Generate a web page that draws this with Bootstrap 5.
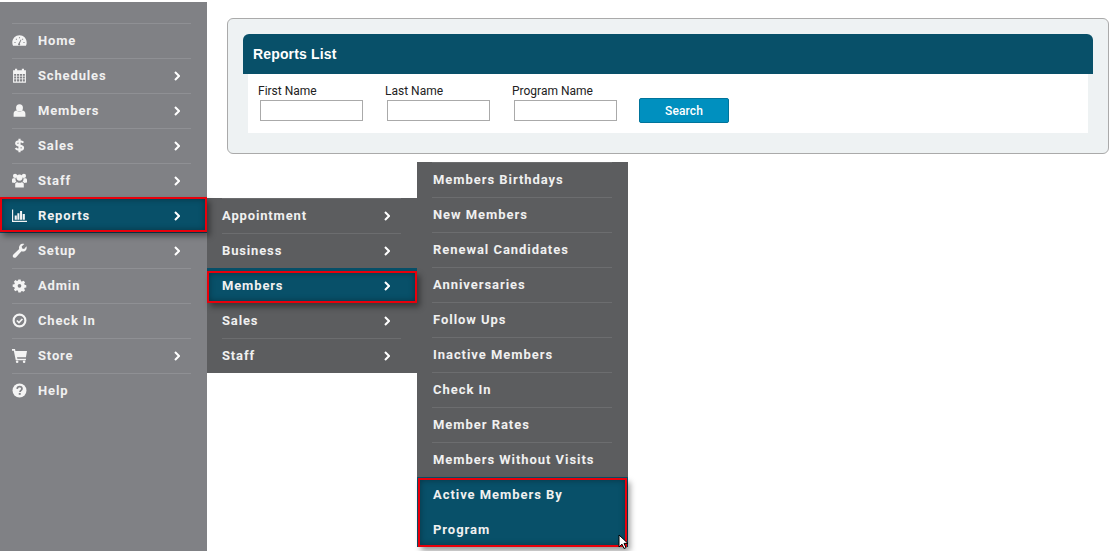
<!DOCTYPE html>
<html lang="en">
<head>
<meta charset="utf-8">
<title>Reports List</title>
<link href="https://cdn.jsdelivr.net/npm/bootstrap@5.3.0/dist/css/bootstrap.min.css" rel="stylesheet">
<style>
html,body{height:551px;overflow:hidden;background:#fff}
.side-col{width:207px;margin-top:2px;height:549px;background:#808185;padding-top:21px;flex:none}
.menu-list{list-style:none;margin:0;padding:0}
.menu-item{position:relative}
.menu-link{display:flex;align-items:center;height:35px;padding:0 27px 0 12px;color:#f0f0f0;text-decoration:none;font:700 13px/20px Roboto,sans-serif;letter-spacing:.85px;position:relative}
.menu-link:hover{color:#f0f0f0}
.menu-link::before{content:"";position:absolute;left:12px;right:16px;top:0;height:1px;background:#8f9094}
.menu-link .ico{width:15px;height:15px;margin-right:11px;flex:none;fill:#f4f4f4}
.menu-link .lbl{flex:1}
.menu-link .chev{width:6px;height:10px;flex:none;fill:none;stroke:#fff;stroke-width:2}
.flyout{position:absolute;left:100%;background:#5c5d5f;z-index:2}
.fly-a{top:0;width:210px}
.fly-b{top:-106px;width:211px}
.flyout .menu-link{padding:0 27px 0 15px}
.fly-b .menu-link{padding:0 15px 0 16px;letter-spacing:.95px}
.flyout .menu-link::before{left:15px;right:16px;background:#6c6d6f}
.menu-item.is-on>.menu-link{background:#085069}
.menu-item.is-on>.menu-link::before{display:none}
.menu-item.is-on+.menu-item>.menu-link::before{display:none}
.marked::after{content:"";position:absolute;border:2px solid #e8000b;box-shadow:3px 4px 6px rgba(0,0,0,.4),inset 0 0 6px rgba(0,0,0,.35);pointer-events:none;z-index:3}
.mark-a::after{left:0;right:0;top:-1px;bottom:1px}
.mark-b::after{left:0;right:0;top:3px;bottom:0}
.mark-c::after{left:1px;right:1px;top:1px;bottom:0}
.fly-b .wrap-row{height:70px;align-items:flex-start;padding-top:0;line-height:35px;white-space:normal}
.fly-b .wrap-row .lbl{line-height:35px;padding-right:30px}
.cursor{position:absolute;right:-2px;bottom:-3px;width:12px;height:16px;z-index:4}
.main-col{flex:1;padding:18px 0 0 20px;min-width:0}
.panel-box{background:#eef2f3;border:1px solid #aaa;border-radius:6px;height:136px;padding:15px 15px 0}
.panel-head{background:#085069;color:#fff;height:40px;border-radius:6px 6px 0 0;padding:0 10px;display:flex;align-items:center;font:700 14px/20px "Liberation Sans",Arial,sans-serif;letter-spacing:.15px}
.panel-body{background:#fff;height:59px;margin:0 5px;padding:10px 10px 0;display:flex;font:400 12px/15px Roboto,sans-serif;color:#222}
.field{width:127px;flex:none}
.field label{display:block;height:16px;line-height:15px}
.field input{display:block;width:103px;height:21px;margin-left:2px;border:1px solid #aaa;background:#fff;padding:0 3px;border-radius:0;outline:0}
.go-btn{width:90px;height:25px;margin:14px 0 0 0;padding:0;background:#0090bf;border:1px solid #00749b;border-radius:2px;color:#fff;font:500 12px/20px Roboto,sans-serif;letter-spacing:.1px}
.go-btn:hover{background:#0090bf;color:#fff;border-color:#00749b}
</style>
</head>
<body class="d-flex">
<svg width="0" height="0" class="position-absolute">
<defs>
<symbol id="chev" viewBox="0 0 6 10"><path d="M1 1l4 4-4 4"/></symbol>
</defs>
</svg>
<aside class="side-col">
<ul class="menu-list">
<li class="menu-item"><a class="menu-link" href="#"><svg class="ico" viewBox="0 0 14 14"><path fill-rule="evenodd" d="M7 2.200C3.300 2.200.3 5.200.3 9c0 1 .2 1.900.7 2.800h12c.5-.9.700-1.800.7-2.800 0-3.800-3-6.800-6.700-6.800zM2.300 8.300h1v1h-1zM3.600 5.300h1v1h-1zM6.500 4h1v1h-1zM9.400 5.300h1v1h-1zM10.700 8.300h1v1h-1zM6 9.800L8.200 6l.6.300-1.500 3.500a1 1 0 1 1-1.300 0z"/></svg><span class="lbl">Home</span></a></li>
<li class="menu-item"><a class="menu-link" href="#"><svg class="ico" viewBox="0 0 14 14"><path fill-rule="evenodd" d="M1 2.200h1.800V.8h2v1.400h4.400V.8h2v1.400H13V13.800H1zM2 5.500v1.700h1.900V5.500zM4.700 5.500v1.700h2V5.500zM7.400 5.500v1.700h2V5.500zM10.100 5.500v1.700H12V5.500zM2 8v1.700h1.900V8zM4.700 8v1.700h2V8zM7.400 8v1.700h2V8zM10.100 8v1.700H12V8zM2 10.500v2.200h1.900v-2.200zM4.700 10.500v2.200h2v-2.200zM7.400 10.500v2.200h2v-2.200zM10.100 10.500v2.200H12v-2.200z"/></svg><span class="lbl">Schedules</span><svg class="chev"><use href="#chev"/></svg></a></li>
<li class="menu-item"><a class="menu-link" href="#"><svg class="ico" viewBox="0 0 14 14"><ellipse cx="7" cy="4.600" rx="3.200" ry="3.400"/><path d="M1.500 12.800V10c0-1.600 1-2.800 2.900-3C5.100 7.700 6 8.200 7 8.200s1.900-.5 2.600-1.200c1.900.2 2.900 1.400 2.900 3v2.800z"/></svg><span class="lbl">Members</span><svg class="chev"><use href="#chev"/></svg></a></li>
<li class="menu-item"><a class="menu-link" href="#"><svg class="ico" viewBox="0 0 14 14"><path fill="none" stroke="#f4f4f4" stroke-width="2" d="M10.600 4.400C9.900 3.500 8.600 3 7 3 5.200 3 3.900 3.800 3.900 5.100 3.900 7.900 10.300 6.300 10.300 9.100c0 1.300-1.400 2-3.300 2-1.600 0-2.900-.6-3.700-1.600M7 .6v12.800"/></svg><span class="lbl">Sales</span><svg class="chev"><use href="#chev"/></svg></a></li>
<li class="menu-item"><a class="menu-link" href="#"><svg class="ico" viewBox="0 0 14 14"><circle cx="2.900" cy="2.700" r="2"/><circle cx="11.100" cy="2.700" r="2"/><circle cx="7" cy="4.300" r="2.900"/><path d="M0 8.800V6.500C0 5.600.6 5 1.500 5h1.800c-.2 1.300.1 2.300.9 3.100-.9.200-1.400.6-1.700 1.300zM14 8.800V6.500C14 5.600 13.400 5 12.500 5h-1.800c.2 1.300-.1 2.300-.9 3.100.9.200 1.400.6 1.700 1.300zM3 13.600V10.500c0-1.100.8-1.900 2-1.900.6.400 1.300.6 2 .6s1.400-.2 2-.6c1.200 0 2 .8 2 1.900v3.100z"/></svg><span class="lbl">Staff</span><svg class="chev"><use href="#chev"/></svg></a></li>
<li class="menu-item is-on"><a class="menu-link marked mark-a" href="#"><svg class="ico" viewBox="0 0 14 14"><path d="M0 1.500h1.100v10.400H14v1.100H0zM2.500 7h2v4h-2zM5 4.800h1.900V11H5zM7.500 2.800h1.900V11H7.500zM10 5.500h2V11h-2z"/></svg><span class="lbl">Reports</span><svg class="chev"><use href="#chev"/></svg></a>
<ul class="menu-list flyout fly-a">
<li class="menu-item"><a class="menu-link" href="#"><span class="lbl">Appointment</span><svg class="chev"><use href="#chev"/></svg></a></li>
<li class="menu-item"><a class="menu-link" href="#"><span class="lbl">Business</span><svg class="chev"><use href="#chev"/></svg></a></li>
<li class="menu-item is-on"><a class="menu-link marked mark-b" href="#"><span class="lbl">Members</span><svg class="chev"><use href="#chev"/></svg></a>
<ul class="menu-list flyout fly-b">
<li class="menu-item"><a class="menu-link" href="#"><span class="lbl">Members Birthdays</span></a></li>
<li class="menu-item"><a class="menu-link" href="#"><span class="lbl">New Members</span></a></li>
<li class="menu-item"><a class="menu-link" href="#"><span class="lbl">Renewal Candidates</span></a></li>
<li class="menu-item"><a class="menu-link" href="#"><span class="lbl">Anniversaries</span></a></li>
<li class="menu-item"><a class="menu-link" href="#"><span class="lbl">Follow Ups</span></a></li>
<li class="menu-item"><a class="menu-link" href="#"><span class="lbl">Inactive Members</span></a></li>
<li class="menu-item"><a class="menu-link" href="#"><span class="lbl">Check In</span></a></li>
<li class="menu-item"><a class="menu-link" href="#"><span class="lbl">Member Rates</span></a></li>
<li class="menu-item"><a class="menu-link" href="#"><span class="lbl">Members Without Visits</span></a></li>
<li class="menu-item is-on"><a class="menu-link marked mark-c wrap-row" href="#"><span class="lbl">Active Members By Program</span></a>
<svg class="cursor" viewBox="0 0 12 16"><path d="M1 1v12l3-2.800 2 4.300 2-.9-2-4.200h4z" fill="#fff" stroke="#000" stroke-width="1"/></svg></li>
</ul></li>
<li class="menu-item"><a class="menu-link" href="#"><span class="lbl">Sales</span><svg class="chev"><use href="#chev"/></svg></a></li>
<li class="menu-item"><a class="menu-link" href="#"><span class="lbl">Staff</span><svg class="chev"><use href="#chev"/></svg></a></li>
</ul></li>
<li class="menu-item"><a class="menu-link" href="#"><svg class="ico" viewBox="0 0 14 14"><path d="M13.500 3c.5 1.600.1 3.200-1.100 4.200-1 .8-2.400 1-3.500.6l-5.100 5.400c-.8.800-1.900.8-2.600.1-.7-.7-.7-1.900.1-2.600l5.400-5.100c-.4-1.200-.2-2.600.6-3.600C8.300.8 10 .4 11.500.9L9 3.300l.5 1.800 1.800.5z"/></svg><span class="lbl">Setup</span><svg class="chev"><use href="#chev"/></svg></a></li>
<li class="menu-item"><a class="menu-link" href="#"><svg class="ico" viewBox="0 0 14 14"><path fill-rule="evenodd" d="M5.800 1h2.400l.4 1.800 1.100.5 1.600-1 1.700 1.700-1 1.600.5 1.100 1.800.4v2.400l-1.800.4-.5 1.100 1 1.600-1.700 1.700-1.600-1-1.100.5L8.200 15H5.800l-.4-1.800-1.100-.5-1.600 1L1 12l1-1.600-.5-1.100L-.3 8.900V6.500l1.800-.4.5-1.100-1-1.600L2.700 1.700l1.600 1 1.100-.5zM7 5.800a2 2 0 1 0 0 4 2 2 0 0 0 0-4z" transform="translate(.9 .5) scale(.87)"/></svg><span class="lbl">Admin</span></a></li>
<li class="menu-item"><a class="menu-link" href="#"><svg class="ico" viewBox="0 0 14 14"><circle cx="7" cy="7" r="5.500" fill="none" stroke="#f4f4f4" stroke-width="2"/><path d="M4.500 7l2 2 3.200-3.400" fill="none" stroke="#f4f4f4" stroke-width="1.600"/></svg><span class="lbl">Check In</span></a></li>
<li class="menu-item"><a class="menu-link" href="#"><svg class="ico" viewBox="0 0 14 14"><path d="M0 1h2.800l.4 1.700H14l-1 6H4.700l.3 1.300h8v1.500H3.500L1.700 2.500H0z"/><circle cx="4.800" cy="12.800" r="1.200"/><circle cx="11.300" cy="12.800" r="1.200"/></svg><span class="lbl">Store</span><svg class="chev"><use href="#chev"/></svg></a></li>
<li class="menu-item"><a class="menu-link" href="#"><svg class="ico" viewBox="0 0 14 14"><circle cx="7" cy="7" r="6.500"/><path d="M4.800 5.500C4.900 4.200 5.900 3.400 7.100 3.400c1.300 0 2.200.8 2.200 1.900 0 1.700-1.800 1.500-1.800 3.100" fill="none" stroke="#808185" stroke-width="1.600"/><rect x="6.300" y="9.300" width="1.800" height="1.700" fill="#808185"/></svg><span class="lbl">Help</span></a></li>
</ul>
</aside>
<main class="main-col">
<section class="panel-box">
<div class="panel-head">Reports List</div>
<form class="panel-body">
<div class="field"><label for="f1">First Name</label><input id="f1" type="text"></div>
<div class="field"><label for="f2">Last Name</label><input id="f2" type="text"></div>
<div class="field"><label for="f3">Program Name</label><input id="f3" type="text"></div>
<button type="button" class="btn go-btn">Search</button>
</form>
</section>
</main>
</body>
</html>
